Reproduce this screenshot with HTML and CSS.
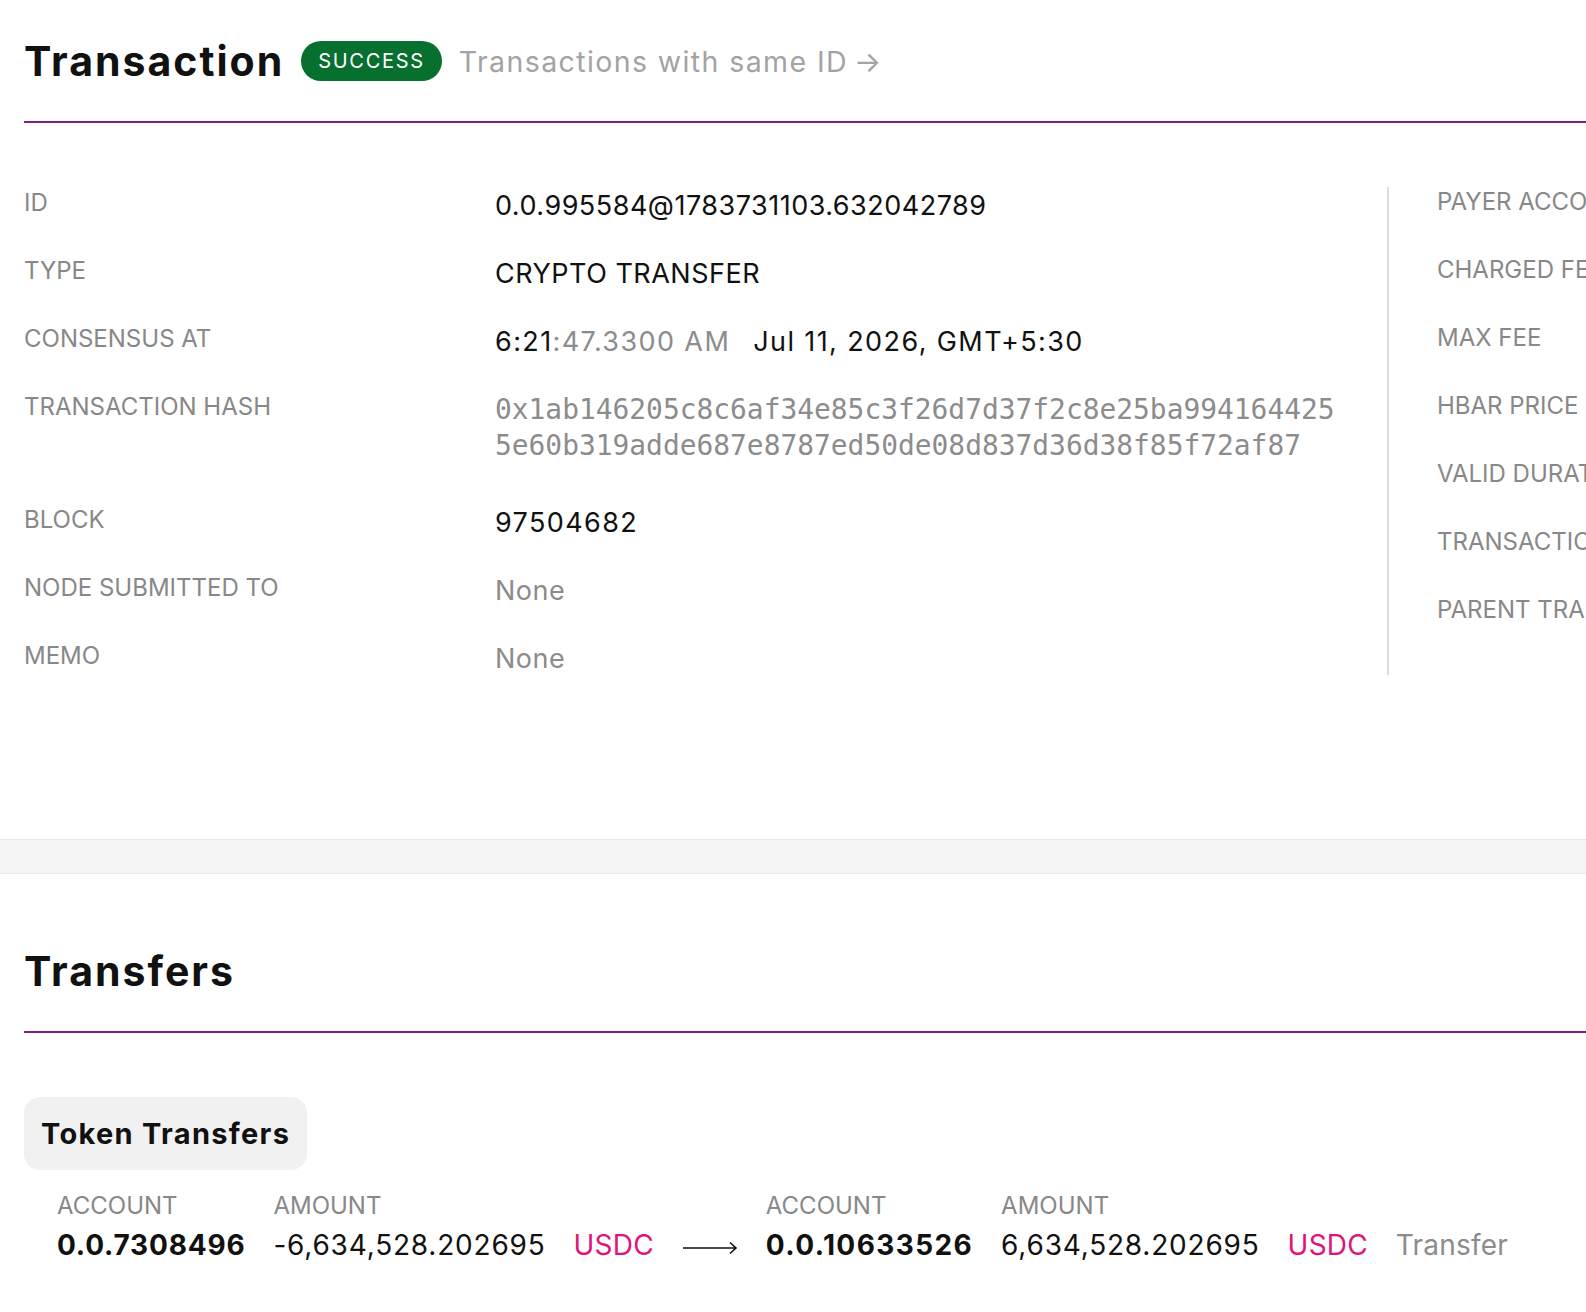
FILE: index.html
```html
<!DOCTYPE html>
<html lang="en">
<head>
  <meta charset="UTF-8">
  <title>Transaction 0.0.995584@1783731103.632042789</title>
  <link rel="stylesheet" href="styles.css">
</head>
<body>
  <div class="page">
    <section class="card">
      <div class="card-head">
        <h1 class="title">Transaction</h1>
        <span class="badge">SUCCESS</span>
        <a class="link" href="#">Transactions with same ID <span class="link-arrow">&rarr;</span></a>
      </div>

      <div class="details">
        <div class="col-main">
          <div class="row">
            <span class="label">ID</span>
            <span class="value">0.0.995584@1783731103.632042789</span>
          </div>
          <div class="row">
            <span class="label">TYPE</span>
            <span class="value">CRYPTO TRANSFER</span>
          </div>
          <div class="row">
            <span class="label">CONSENSUS AT</span>
            <span class="value wide">6:21<span class="muted">:47.3300 AM</span><span class="date">Jul 11, 2026, GMT+5:30</span></span>
          </div>
          <div class="row row-hash">
            <span class="label">TRANSACTION HASH</span>
            <span class="value hash">0x1ab146205c8c6af34e85c3f26d7d37f2c8e25ba9941644255e60b319adde687e8787ed50de08d837d36d38f85f72af87</span>
          </div>
          <div class="row">
            <span class="label">BLOCK</span>
            <span class="value wide">97504682</span>
          </div>
          <div class="row">
            <span class="label">NODE SUBMITTED TO</span>
            <span class="value muted">None</span>
          </div>
          <div class="row">
            <span class="label">MEMO</span>
            <span class="value muted">None</span>
          </div>
        </div>

        <div class="col-side">
          <div class="row"><span class="label">PAYER ACCOUNT</span></div>
          <div class="row"><span class="label">CHARGED FEE</span></div>
          <div class="row"><span class="label">MAX FEE</span></div>
          <div class="row"><span class="label">HBAR PRICE</span></div>
          <div class="row"><span class="label">VALID DURATION</span></div>
          <div class="row"><span class="label">TRANSACTION NONCE</span></div>
          <div class="row"><span class="label">PARENT TRANSACTION</span></div>
        </div>
      </div>
    </section>

    <div class="band"></div>

    <section class="card card-transfers">
      <div class="card-head">
        <h2 class="title">Transfers</h2>
      </div>

      <div class="tab">Token Transfers</div>

      <div class="transfers">
        <span class="th">ACCOUNT</span>
        <span class="th">AMOUNT</span>
        <span></span>
        <span></span>
        <span class="th">ACCOUNT</span>
        <span class="th">AMOUNT</span>
        <span></span>
        <span></span>

        <span class="td account">0.0.7308496</span>
        <span class="td">-6,634,528.202695</span>
        <span class="td token">USDC</span>
        <span class="td arrow">
          <svg width="56" height="16" viewBox="0 0 56 16"><path d="M1 8H54M48 2.5L54 8L48 13.5" fill="none" stroke="#111" stroke-width="1.6"/></svg>
        </span>
        <span class="td account account-wide">0.0.10633526</span>
        <span class="td">6,634,528.202695</span>
        <span class="td token">USDC</span>
        <span class="td token-type">Transfer</span>
      </div>
    </section>
  </div>
</body>
</html>
```

FILE: styles.css
```css
html, body {
  margin: 0;
  overflow: hidden;
  background: #fff;
}
body {
  font-family: Inter, "Noto Sans", sans-serif;
  color: #111;
}
.page {
  width: 2900px;
}
.card {
  padding: 37px 0 0 24px;
}
.card-transfers {
  padding-top: 73px;
}
.card-head {
  display: flex;
  align-items: center;
  gap: 17px;
  height: 48px;
  padding-bottom: 36px;
  border-bottom: 2px solid #7d1e80;
}
.title {
  margin: 0;
  font-size: 41px;
  line-height: 48px;
  font-weight: 700;
  letter-spacing: 2px;
}
.badge {
  display: flex;
  align-items: center;
  height: 40px;
  padding: 0 17px;
  border-radius: 20px;
  background: #08702f;
  color: #fff;
  font-size: 20px;
  font-weight: 400;
  letter-spacing: 1.7px;
}
.link {
  display: flex;
  align-items: center;
  gap: 6px;
  color: #a3a3a3;
  font-size: 28.5px;
  letter-spacing: 1.4px;
  text-decoration: none;
}

.details {
  display: flex;
  align-items: flex-start;
  padding: 65px 0 130px;
}
.col-main {
  width: 1363px;
}
.col-side {
  border-left: 2px solid #ddd;
  padding: 0 0 12px 48px;
  margin-top: -1px;
}
.row {
  display: grid;
  grid-template-columns: 471px 1fr;
  grid-auto-rows: minmax(36px, auto);
  align-items: start;
  padding-bottom: 32px;
}
.row-hash {
  padding-bottom: 40.5px;
}
.label {
  font-size: 24px;
  line-height: 30px;
  color: #888;
  white-space: nowrap;
}
.value {
  font-size: 27px;
  line-height: 36px;
  letter-spacing: 0.5px;
}
.value.wide {
  letter-spacing: 1.4px;
}
.muted {
  color: #8c8c8c;
}
.date {
  margin-left: 23px;
}
.hash {
  font-family: "DejaVu Sans Mono", "Liberation Mono", monospace;
  font-size: 27.9px;
  letter-spacing: 0;
  color: #8c8c8c;
  max-width: 50ch;
  word-break: break-all;
}

.band {
  height: 33px;
  background: #f5f5f5;
  border-top: 1px solid #e9e9e9;
  border-bottom: 1px solid #e9e9e9;
}

.tab {
  display: inline-block;
  margin-top: 64px;
  height: 73px;
  line-height: 73px;
  padding: 0 17px;
  border-radius: 16px;
  background: #f1f1f1;
  font-size: 29px;
  font-weight: 700;
  letter-spacing: 1.3px;
}
.transfers {
  display: grid;
  grid-template-columns: repeat(8, auto);
  justify-content: start;
  column-gap: 28px;
  row-gap: 6px;
  margin-top: 21px;
  padding-left: 33px;
}
.th {
  font-size: 24px;
  line-height: 30px;
  color: #888;
}
.td {
  font-size: 28px;
  line-height: 36px;
  letter-spacing: 0.8px;
}
.account {
  font-weight: 700;
}
.account-wide {
  letter-spacing: 1.4px;
}
.token {
  color: #e0147a;
  letter-spacing: 0.2px;
}
.token-type {
  color: #8c8c8c;
  letter-spacing: 0.2px;
}
.arrow {
  display: flex;
  align-items: center;
  padding-top: 6px;
}
```
